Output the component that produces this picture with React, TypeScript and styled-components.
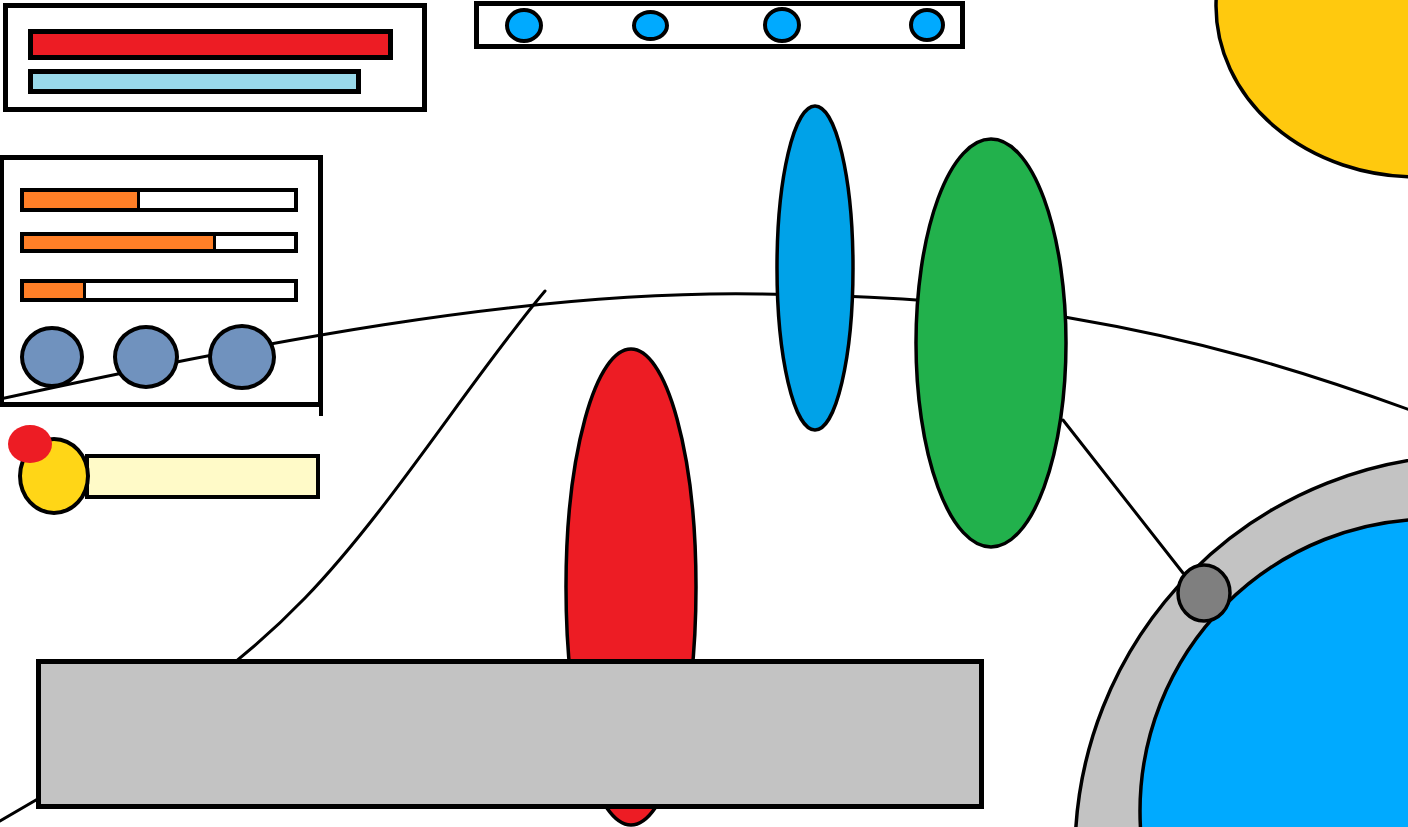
import React from 'react'
import styled, { createGlobalStyle } from 'styled-components'

const colors = {
    ink: '#000000',
    red: '#ed1c24',
    skyBar: '#99d9ea',
    orange: '#ff7f27',
    steel: '#7092be',
    gold: '#ffd617',
    sun: '#ffc90e',
    cream: '#fffac8',
    grey: '#c3c3c3',
    moon: '#7f7f7f',
    cyan: '#00a2e8',
    azure: '#00aaff',
    green: '#22b14c',
}

const GlobalStyle = createGlobalStyle`
    html, body {
        margin: 0;
        padding: 0;
        background: #ffffff;
        overflow: hidden;
        font-family: 'Liberation Sans', Arial, sans-serif;
    }
`

const Stage = styled.div`
    position: relative;
    width: 1408px;
    height: 827px;
    overflow: hidden;
    background: #ffffff;
`

const SceneSvg = styled.svg`
    position: absolute;
    inset: 0;
    width: 1408px;
    height: 827px;
`

const Hud = styled.div`
    position: absolute;
    inset: 0;
    display: flex;
    flex-direction: column;
    align-items: flex-start;
`

const TopRow = styled.div`
    display: flex;
    align-items: flex-start;
`

const VitalsPanel = styled.div`
    box-sizing: border-box;
    width: 424px;
    height: 109px;
    margin: 3px 0 0 3px;
    border: 5px solid ${colors.ink};
    padding: 21px 0 0 20px;
    display: flex;
    flex-direction: column;
    gap: 9px;
`

const Meter = styled.div<{ $w: number; $h: number; $fill: string }>`
    box-sizing: border-box;
    width: ${(p) => p.$w}px;
    height: ${(p) => p.$h}px;
    border: 5px solid ${colors.ink};
    background: ${(p) => p.$fill};
`

const SlotBar = styled.div`
    box-sizing: border-box;
    width: 491px;
    height: 48px;
    margin: 1px 0 0 47px;
    border: 5px solid ${colors.ink};
    display: flex;
    align-items: center;
`

const Slot = styled.div<{ $w: number; $h: number; $ml: number }>`
    box-sizing: border-box;
    width: ${(p) => p.$w}px;
    height: ${(p) => p.$h}px;
    margin-left: ${(p) => p.$ml}px;
    border: 4px solid ${colors.ink};
    border-radius: 50%;
    background: ${colors.azure};
`

const StatsPanel = styled.div`
    position: relative;
    box-sizing: border-box;
    width: 323px;
    height: 252px;
    margin-top: 43px;
    border: 5px solid ${colors.ink};
    border-left-width: 4px;
    padding: 28px 0 0 16px;
    display: flex;
    flex-direction: column;
    &::after {
        content: '';
        position: absolute;
        right: -5px;
        bottom: -14px;
        width: 4px;
        height: 9px;
        background: ${colors.ink};
    }
`

const StatTrack = styled.div<{ $h: number; $mt: number }>`
    box-sizing: border-box;
    width: 278px;
    height: ${(p) => p.$h}px;
    margin-top: ${(p) => p.$mt}px;
    border: 4px solid ${colors.ink};
    background: #ffffff;
    display: flex;
`

const StatFill = styled.div`
    height: 100%;
    background: ${colors.orange};
    border-right: 3px solid ${colors.ink};
`

const OrbRow = styled.div`
    display: flex;
    align-items: center;
    gap: 29px;
    margin-top: 22px;
`

const Orb = styled.div<{ $d: number }>`
    box-sizing: border-box;
    width: ${(p) => p.$d}px;
    height: ${(p) => p.$d - 2}px;
    border: 4px solid ${colors.ink};
    border-radius: 50%;
    background: ${colors.steel};
`

const ChargeRow = styled.div`
    position: relative;
    display: flex;
    align-items: center;
    margin: 30px 0 0 18px;
`

const ChargeKnob = styled.div`
    position: relative;
    z-index: 1;
    box-sizing: border-box;
    width: 72px;
    height: 78px;
    border: 4px solid ${colors.ink};
    border-radius: 50%;
    background: ${colors.gold};
`

const ChargeBar = styled.div`
    box-sizing: border-box;
    width: 235px;
    height: 45px;
    margin-left: -5px;
    border: 4px solid ${colors.ink};
    background: ${colors.cream};
`

const AlertDot = styled.span`
    position: absolute;
    z-index: 2;
    left: -10px;
    top: -12px;
    width: 44px;
    height: 38px;
    border-radius: 50%;
    background: ${colors.red};
`

const Console = styled.div`
    box-sizing: border-box;
    width: 948px;
    height: 150px;
    margin: auto 0 18px 36px;
    border: 5px solid ${colors.ink};
    background: ${colors.grey};
`

const slots = [
    { w: 38, h: 35, ml: 26 },
    { w: 37, h: 31, ml: 89 },
    { w: 38, h: 36, ml: 94 },
    { w: 36, h: 34, ml: 108 },
]

const stats = [
    { pct: 42, h: 24, mt: 0 },
    { pct: 70, h: 21, mt: 20 },
    { pct: 22, h: 23, mt: 26 },
]

const Scene: React.FC = () => (
    <SceneSvg viewBox="0 0 1408 827">
        <g stroke={colors.ink} strokeWidth={3.5}>
            <ellipse cx={1417} cy={6} rx={201} ry={171} fill={colors.sun} />
        </g>
        <g stroke={colors.ink} strokeWidth={3} fill="none" strokeLinecap="round">
            <path d="M0,399 C250,345 520,290 760,294 C900,296 1000,305 1070,318 C1200,340 1300,370 1410,410" />
            <path d="M545,291 C470,380 390,510 305,598 S140,730 36,800 L0,821" />
            <path d="M1063,420 L1183,573" />
        </g>
        <g stroke={colors.ink} strokeWidth={3.5}>
            <ellipse cx={815} cy={268} rx={38} ry={162} fill={colors.cyan} />
            <ellipse cx={991} cy={343} rx={75} ry={204} fill={colors.green} />
            <ellipse cx={631} cy={587} rx={65} ry={238} fill={colors.red} />
            <circle cx={1474} cy={854} r={399} fill={colors.grey} />
            <circle cx={1432} cy={811} r={292} fill={colors.azure} />
            <ellipse cx={1204} cy={593} rx={26} ry={28} fill={colors.moon} />
        </g>
    </SceneSvg>
)

const App: React.FC = () => {
    return (
        <Stage>
            <GlobalStyle />
            <Scene />
            <Hud>
                <TopRow>
                    <VitalsPanel>
                        <Meter $w={365} $h={31} $fill={colors.red} />
                        <Meter $w={333} $h={25} $fill={colors.skyBar} />
                    </VitalsPanel>
                    <SlotBar>
                        {slots.map((s, i) => (
                            <Slot key={i} $w={s.w} $h={s.h} $ml={s.ml} />
                        ))}
                    </SlotBar>
                </TopRow>
                <StatsPanel>
                    {stats.map((s, i) => (
                        <StatTrack key={i} $h={s.h} $mt={s.mt}>
                            <StatFill style={{ width: `${s.pct}%` }} />
                        </StatTrack>
                    ))}
                    <OrbRow>
                        <Orb $d={64} />
                        <Orb $d={66} />
                        <Orb $d={68} />
                    </OrbRow>
                </StatsPanel>
                <ChargeRow>
                    <AlertDot />
                    <ChargeKnob />
                    <ChargeBar />
                </ChargeRow>
                <Console />
            </Hud>
        </Stage>
    )
}

export default App
